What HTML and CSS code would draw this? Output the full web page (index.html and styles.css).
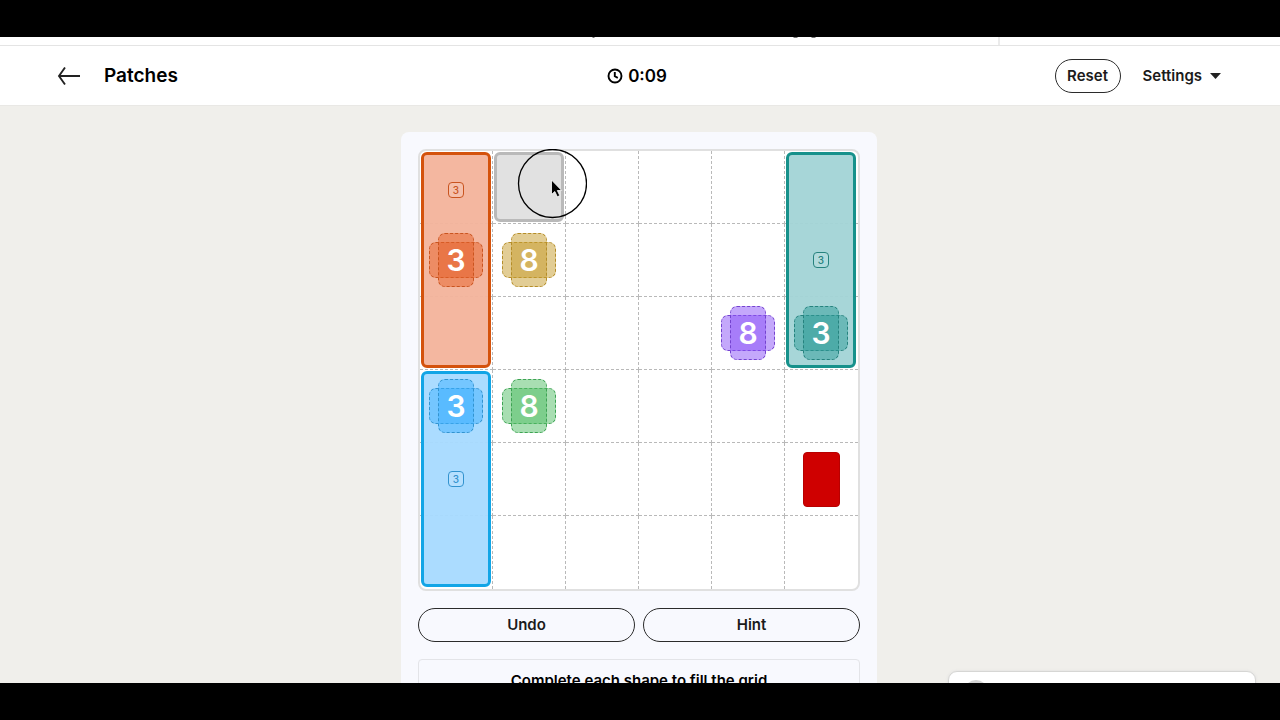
FILE: index.html
```html
<!DOCTYPE html>
<html lang="en">
<head>
  <meta charset="UTF-8" />
  <meta name="viewport" content="width=device-width, initial-scale=1.0"/>
  <title>Patches</title>
  <link rel="stylesheet" href="styles.css">
</head>
<body>
  <div class="screen">
    <div class="top-strip">
      <svg width="226" height="2" viewBox="0 0 226 2" fill="#777"><path d="M0 0h3l-1 1h-1zM201 0h5l-1 1h-3zM219 0h5l-1 1h-3z"/></svg>
      <div class="strip-side"></div>
    </div>

    <header>
      <div class="left">
        <a href="#" class="back" aria-label="Back">
          <svg width="24" height="20" viewBox="0 0 24 20" fill="none" stroke="#222" stroke-width="1.9"><path d="M23 10H2.500M8 1.500L2 10l6 8.500"/></svg>
        </a>
        <h1>Patches</h1>
      </div>
      <div class="timer">
        <svg width="16" height="16" viewBox="0 0 16 16" fill="none" stroke="#000" stroke-width="1.9"><circle cx="8" cy="8" r="6.500"/><path d="M7.800 4v4.300l3 1.600"/></svg>
        <span>0:09</span>
      </div>
      <div class="right">
        <button class="pill reset">Reset</button>
        <button class="settings">Settings <svg width="11" height="6" viewBox="0 0 11 6"><path d="M0 0h11L5.500 6z" fill="#222"/></svg></button>
      </div>
    </header>

    <main>
      <div class="panel">
        <div class="board" id="board"></div>
        <div class="actions">
          <button class="pill">Undo</button>
          <button class="pill">Hint</button>
        </div>
        <div class="howto">
          <h2>Complete each shape to fill the grid</h2>
        </div>
      </div>
    </main>

    <div class="chat"><span class="avatar"></span></div>

    <svg class="pointer" width="70" height="70" viewBox="0 0 70 70">
      <circle cx="35.500" cy="34.500" r="34" fill="none" stroke="#000" stroke-width="1.3"/>
      <path d="M34.500 31v14.500l3.300-3 2.500 5.300 2.500-1.200-2.500-5.100h4.400z" fill="#000" stroke="#fff" stroke-width=".8"/>
    </svg>
  </div>

  <script src="board.js"></script>
</body>
</html>
```
FILE: styles.css
```css
* { box-sizing: border-box; }
body { margin: 0; height: 100vh; padding: 37px 0; background: #000; font-family: Inter, "Liberation Sans", sans-serif; color: #1b1b1b; }
h1, h2 { margin: 0; font-weight: 600; color: #000; }
button { font-family: inherit; font-size: 15px; font-weight: 600; line-height: 18px; color: #1b1b1b; background: none; border: 0; padding: 0; }

.screen { position: relative; display: flex; flex-direction: column; height: 100%; overflow: hidden; background: #f0efeb; }

.top-strip { display: flex; justify-content: flex-end; height: 8px; flex: none; background: #fff; }
.top-strip svg { margin-right: 180px; }
.strip-side { width: 282px; border-left: 2px solid #ebebeb; }

header { display: flex; align-items: center; flex: none; height: 60px; padding: 0 59px 0 57px; background: #fff; border-top: 1px solid #e4e4e4; box-shadow: 0 1px 0 #e9e8e5; }
.left, .right { display: flex; align-items: center; flex: 1; }
.left { gap: 23px; }
.right { justify-content: flex-end; gap: 22px; }
.back { display: flex; }
h1 { font-size: 19px; }
.timer { display: flex; align-items: center; gap: 5px; padding-right: 4px; font-size: 17px; font-weight: 600; color: #000; }
.pill { flex: 1; height: 34px; border: 1px solid #2b2b2b; border-radius: 17px; }
.reset { flex: none; width: 66px; }
.settings { display: flex; align-items: center; gap: 8px; }

main { display: flex; justify-content: center; padding: 27px 2px 0 0; }
.panel { flex: none; width: 476px; padding: 17px; background: #f8f9fe; border-radius: 8px; }

.board { display: grid; grid-template: repeat(6, 73px) / repeat(6, 73px); background: #fff; border: 2px solid #e0e0e0; border-radius: 8px; }
.cell { border: 0 dashed #b9b9b9; border-width: 0 1px 1px 0; }
.cell.last-col { border-right: 0; }
.cell.last-row { border-bottom: 0; }

.patch { display: flex; align-items: center; justify-content: center; margin: 1px 2px 2px 1px; border: 3px solid var(--line); border-radius: 6px; background: var(--fill); }
.orange { --line: #d4520c; --fill: #f3b39bf2; --clue: #e5622b; --dash: #c9541f; }
.blue { --line: #12a5e6; --fill: #a6dafff2; --clue: #3fb1ff; --dash: #3293cf; }
.teal { --line: #16918b; --fill: #a2d4d6f2; --clue: #319c99; --dash: #26827e; }
.gold { --clue: #c69d2f; --dash: #b58d28; }
.purple { --clue: #8b54f7; --dash: #7443cf; }
.green { --clue: #55be68; --dash: #3da353; }
.gray { --line: #b9b9b9; --fill: #e1e1e1; }
.patch.orange { align-items: flex-start; padding-top: 27px; }

.badge { width: 16px; height: 16px; border: 1px solid var(--dash); border-radius: 4px; background: #ffffff22; color: var(--dash); font-size: 10px; font-weight: 500; line-height: 14px; text-align: center; }

.clue { display: grid; place-items: center; place-content: center; padding: 0 1px 1px 0; }
.clue > * { grid-area: 1 / 1; }
.bar { width: 54px; height: 36px; border: 1px dashed var(--dash); border-radius: 7px; background: color-mix(in srgb, var(--clue) 51%, transparent); }
.bar.tall { width: 36px; height: 54px; }
.number { color: #fff; font-size: 30px; font-weight: 600; line-height: 36px; }
.red { width: 37px; height: 55px; border: 1px solid #b80000; border-radius: 4px; background: #cf0000; }

.actions { display: flex; gap: 8px; margin: 17px 0; }
.howto { height: 120px; padding: 10px; border: 1px solid #e3e4e8; border-radius: 4px; text-align: center; }
h2 { font-size: 15px; line-height: 22px; }

.chat { position: absolute; right: 24px; bottom: -37px; width: 308px; height: 49px; padding: 8px 15px; background: #fff; border: 1px solid #d6d6d4; border-radius: 9px; box-shadow: 0 0 3px #ddd; }
.avatar { display: block; width: 24px; height: 24px; border-radius: 50%; background: #d4d4d4; }
.pointer { position: absolute; left: 517px; top: 112px; }
```
FILE: board.js
```js
const patches = [
  { color: 'orange', col: 1, row: 1, rows: 3, label: 3 },
  { color: 'gray', col: 2, row: 1, rows: 1 },
  { color: 'teal', col: 6, row: 1, rows: 3, label: 3 },
  { color: 'blue', col: 1, row: 4, rows: 3, label: 3 }
];

const clues = [
  { color: 'orange', col: 1, row: 2, size: 3 },
  { color: 'gold', col: 2, row: 2, size: 8 },
  { color: 'purple', col: 5, row: 3, size: 8 },
  { color: 'teal', col: 6, row: 3, size: 3 },
  { color: 'blue', col: 1, row: 4, size: 3 },
  { color: 'green', col: 2, row: 4, size: 8 },
  { col: 6, row: 5 }
];

const board = document.getElementById('board');

function place(className, col, row, rows, html) {
  const div = document.createElement('div');
  div.className = className;
  div.style.gridArea = `${row} / ${col} / span ${rows} / span 1`;
  div.innerHTML = html;
  board.appendChild(div);
}

for (let row = 1; row <= 6; row++) {
  for (let col = 1; col <= 6; col++) {
    const edge = (col === 6 ? ' last-col' : '') + (row === 6 ? ' last-row' : '');
    place('cell' + edge, col, row, 1, '');
  }
}

patches.forEach(p => {
  place(`patch ${p.color}`, p.col, p.row, p.rows, p.label ? `<span class="badge">${p.label}</span>` : '');
});

clues.forEach(c => {
  const shape = c.size
    ? `<span class="bar"></span><span class="bar tall"></span><span class="number">${c.size}</span>`
    : '<span class="red"></span>';
  place(`clue ${c.color || ''}`, c.col, c.row, 1, shape);
});
```
